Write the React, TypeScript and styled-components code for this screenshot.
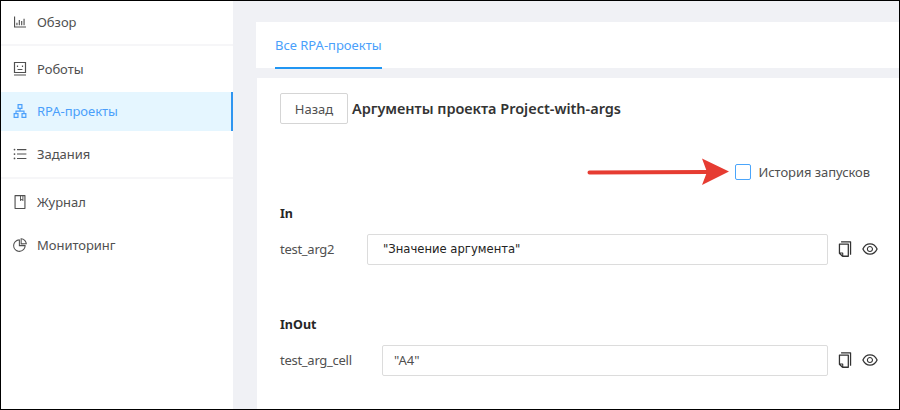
import React from 'react';
import styled, { createGlobalStyle } from 'styled-components';
import {
  AiOutlineApartment,
  AiOutlineBarChart,
  AiOutlineBook,
  AiOutlineCopy,
  AiOutlineEye,
  AiOutlinePieChart,
  AiOutlineUnorderedList,
} from 'react-icons/ai';

const GlobalStyle = createGlobalStyle`
  * { box-sizing: border-box; }
  body {
    margin: 0;
    font-family: "Noto Sans", "Open Sans", sans-serif;
    font-size: 13px;
    color: #505050;
  }
`;

const Window = styled.div`
  display: flex;
  width: 900px;
  height: 410px;
  overflow: hidden;
  border: 1px solid #000;
  background: #f0f1f5;
`;

const Sidebar = styled.nav`
  width: 232px;
  flex: none;
  background: #fff;
  padding-top: 1px;
`;

const Divider = styled.div`
  height: 2px;
  margin-bottom: 3px;
  background: #f6f6f8;
`;

const MenuItem = styled.a<{ $active?: boolean; $gap?: number }>`
  display: flex;
  align-items: center;
  height: 39px;
  margin-bottom: ${(p) => p.$gap ?? 4}px;
  padding-left: 11px;
  padding-bottom: ${(p) => (p.$active ? 1 : 0)}px;
  gap: 9px;
  letter-spacing: -0.04px;
  border-right: 2px solid ${(p) => (p.$active ? '#2f95f0' : 'transparent')};
  background: ${(p) => (p.$active ? '#e5f6ff' : 'transparent')};
  color: ${(p) => (p.$active ? '#4a9ffb' : '#505050')};
  white-space: nowrap;

  svg {
    width: 16px;
    height: 16px;
    flex: none;
  }
`;

const Main = styled.main`
  flex: 1;
  min-width: 0;
  padding: 21px 0 0 23px;
`;

const TabBar = styled.div`
  display: flex;
  height: 46px;
  padding-left: 19px;
  background: #fff;
`;

const Tab = styled.div`
  height: 47px;
  width: 107px;
  padding-top: 13px;
  line-height: 20px;
  border-bottom: 2px solid #2196f3;
  color: #4a9ffb;
  white-space: nowrap;
`;

const Card = styled.section`
  height: 340px;
  margin: 10px 0 0 1px;
  padding: 15px 0 0 23px;
  background: #fff;
`;

const Header = styled.header`
  display: flex;
  align-items: center;
  height: 31px;
  gap: 4px;
`;

const BackButton = styled.button`
  width: 68px;
  height: 31px;
  padding: 0;
  border: 1px solid #d5d5d5;
  border-radius: 2px;
  background: #fff;
  color: #505050;
  font: inherit;
`;

const Title = styled.h1`
  margin: 0;
  padding-bottom: 2px;
  font-size: 14.5px;
  line-height: 20px;
  font-weight: 600;
  letter-spacing: -0.02px;
  color: #333;
  white-space: nowrap;
`;

const History = styled.div`
  display: flex;
  align-items: center;
  justify-content: flex-end;
  height: 20px;
  margin-top: 38px;
  padding-right: 29px;
  gap: 7px;
`;

const Arrow = styled.svg`
  width: 142px;
  height: 28px;
  margin-right: -1px;
`;

const Checkbox = styled.span`
  width: 16px;
  height: 16px;
  border: 1px solid #4aa5fb;
  border-radius: 2px;
`;

const HistoryLabel = styled.span`
  letter-spacing: -0.06px;
`;

const Group = styled.div<{ $top: number }>`
  margin-top: ${(p) => p.$top}px;
`;

const GroupTitle = styled.h2`
  height: 20px;
  margin: 0 0 11px;
  font-size: 12.5px;
  line-height: 22px;
  font-weight: 700;
  color: #262626;
`;

const ArgumentRow = styled.div`
  display: flex;
  align-items: center;
  height: 31px;
  padding-right: 20px;
`;

const ArgumentName = styled.label<{ $width: number }>`
  width: ${(p) => p.$width}px;
  flex: none;
  padding-bottom: 2px;
  letter-spacing: -0.27px;
`;

const Field = styled.div<{ $strong?: boolean }>`
  flex: 1;
  height: 31px;
  padding-left: ${(p) => (p.$strong ? 15 : 11)}px;
  border: 1px solid #dcdcdc;
  border-radius: 2px;
  line-height: 29px;
  font-family: ${(p) => (p.$strong ? '"DejaVu Sans"' : '"Noto Sans"')}, sans-serif;
  font-size: ${(p) => (p.$strong ? 11.6 : 13)}px;
  color: ${(p) => (p.$strong ? '#222' : '#505050')};
`;

const Actions = styled.div`
  display: flex;
  align-items: center;
  gap: 7px;
  margin-left: 8px;
  padding-bottom: 1px;
  color: #333;

  svg {
    width: 18px;
    height: 18px;
  }
`;

const RobotIcon = () => (
  <svg viewBox="-1 -1 16 16" fill="none" stroke="currentColor" strokeWidth="1.2">
    <path d="M1.5.5h11v10h-11zM1 13h12" />
    <path d="M4.5 3.5v1.5M9.5 3.5v1.5M4.6 7.5h4.8" />
  </svg>
);

const RowActions = () => (
  <Actions>
    <AiOutlineCopy />
    <AiOutlineEye />
  </Actions>
);

export default function App() {
  return (
    <>
      <GlobalStyle />
      <Window>
        <Sidebar>
          <MenuItem $gap={3}><AiOutlineBarChart />Обзор</MenuItem>
          <Divider />
          <MenuItem><RobotIcon />Роботы</MenuItem>
          <MenuItem $active $gap={3}><AiOutlineApartment />RPA-проекты</MenuItem>
          <MenuItem><AiOutlineUnorderedList />Задания</MenuItem>
          <Divider />
          <MenuItem><AiOutlineBook />Журнал</MenuItem>
          <MenuItem><AiOutlinePieChart />Мониторинг</MenuItem>
        </Sidebar>
        <Main>
          <TabBar><Tab>Все RPA-проекты</Tab></TabBar>
          <Card>
            <Header>
              <BackButton>Назад</BackButton>
              <Title>Аргументы проекта Project-with-args</Title>
            </Header>
            <History>
              <Arrow viewBox="0 0 142 28">
                <path d="M2.5 14.5L120 14" stroke="#e63c32" strokeWidth="4" strokeLinecap="round" />
                <path d="M115 .5L142 13.5L115 27L120 14z" fill="#e63c32" />
              </Arrow>
              <Checkbox />
              <HistoryLabel>История запусков</HistoryLabel>
            </History>
            <Group $top={21}>
              <GroupTitle>In</GroupTitle>
              <ArgumentRow>
                <ArgumentName $width={87}>test_arg2</ArgumentName>
                <Field $strong>"Значение аргумента"</Field>
                <RowActions />
              </ArgumentRow>
            </Group>
            <Group $top={49}>
              <GroupTitle>InOut</GroupTitle>
              <ArgumentRow>
                <ArgumentName $width={102}>test_arg_cell</ArgumentName>
                <Field>"A4"</Field>
                <RowActions />
              </ArgumentRow>
            </Group>
          </Card>
        </Main>
      </Window>
    </>
  );
}
